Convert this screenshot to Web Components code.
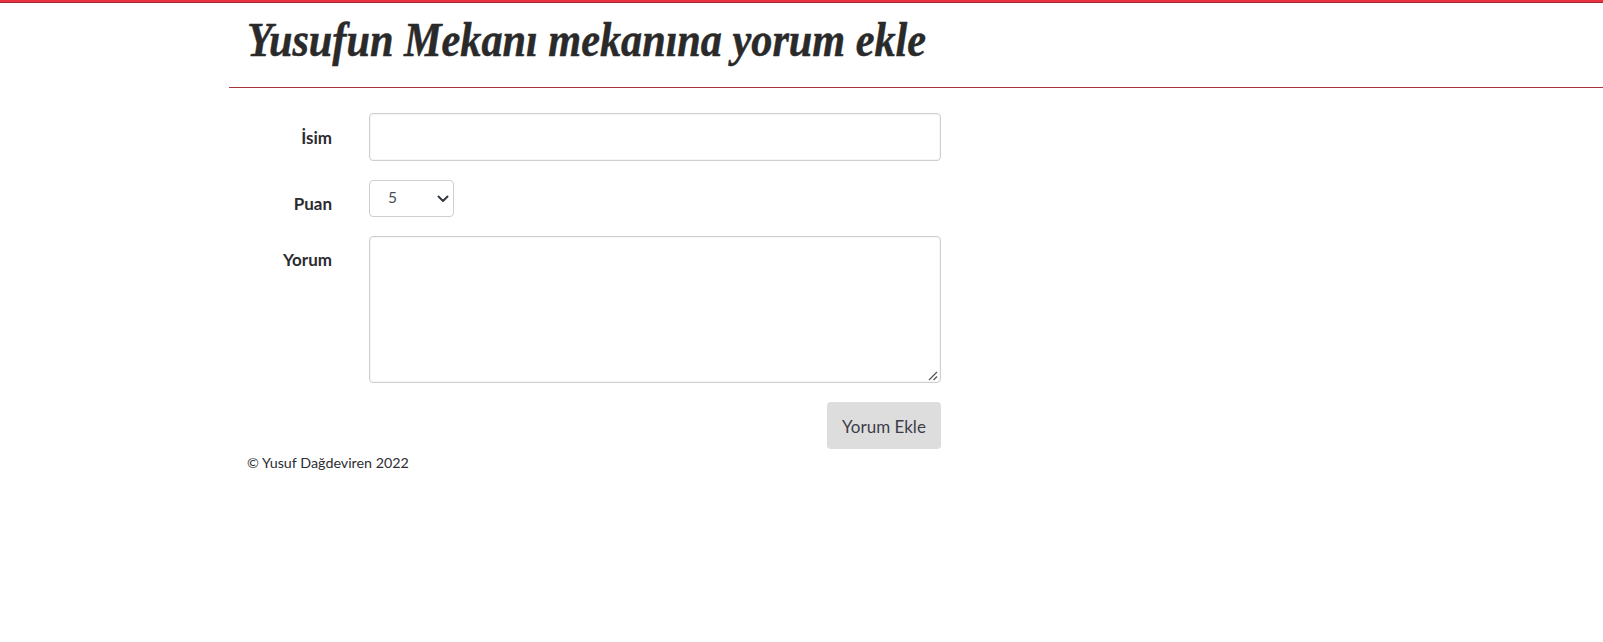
<!DOCTYPE html>
<html lang="tr">
<head>
<meta charset="utf-8">
<title>Yorum Ekle</title>
<style>
    html, body { margin: 0; padding: 0; background: #fff; }
    body { font-family: Lato, "Open Sans", sans-serif; color: #2c2c2c; }
</style>
</head>
<body>
<top-bar></top-bar>
<page-main>
    <page-header slot="header">Yusufun Mekanı mekanına yorum ekle</page-header>
    <review-form slot="form"></review-form>
    <page-footer slot="footer">© Yusuf Dağdeviren 2022</page-footer>
</page-main>

<script>
class TopBar extends HTMLElement {
    constructor() {
        super();
        this.attachShadow({mode: "open"}).innerHTML = `
            <style>
                :host {
                    display: block;
                    height: 2px;
                    background: #e8323f;
                    border-bottom: 1px solid #a32a30;
                }
            </style>
        `;
    }
}

class PageMain extends HTMLElement {
    constructor() {
        super();
        this.attachShadow({mode: "open"}).innerHTML = `
            <style>
                :host {
                    display: block;
                    margin-left: 229px;
                }
            </style>
            <slot name="header"></slot>
            <slot name="form"></slot>
            <slot name="footer"></slot>
        `;
    }
}

class PageHeader extends HTMLElement {
    constructor() {
        super();
        this.attachShadow({mode: "open"}).innerHTML = `
            <style>
                :host {
                    display: block;
                    height: 85px;
                    box-sizing: border-box;
                    padding: 9px 0 0 18px;
                    border-bottom: 1px solid #a5343a;
                }
                h1 {
                    margin: 0;
                    font: italic bold 48px/56px "Liberation Serif", serif;
                    -webkit-text-stroke: 0.5px #2a2a2a;
                    color: #2a2a2a;
                    white-space: nowrap;
                    transform: scaleX(0.88);
                    transform-origin: left center;
                }
            </style>
            <h1><slot></slot></h1>
        `;
    }
}

class FormRow extends HTMLElement {
    constructor() {
        super();
        this.attachShadow({mode: "open"}).innerHTML = `
            <style>
                :host {
                    display: grid;
                    grid-template-columns: 85px 572px;
                    column-gap: 37px;
                    margin-bottom: 19px;
                }
                label {
                    text-align: right;
                    font-size: 17px;
                    font-weight: 700;
                    line-height: 24px;
                    padding-top: var(--label-top, 12px);
                    color: #2b2b30;
                }
            </style>
            <label></label>
            <div><slot></slot></div>
        `;
    }
    connectedCallback() {
        this.shadowRoot.querySelector("label").textContent = this.getAttribute("label") || "";
    }
}

class ReviewForm extends HTMLElement {
    constructor() {
        super();
        this.attachShadow({mode: "open"}).innerHTML = `
            <style>
                :host {
                    display: block;
                    padding: 25px 0 0 18px;
                }
                input, textarea, select {
                    display: block;
                    box-sizing: border-box;
                    width: 100%;
                    background: #fff;
                    border: 1px solid #cfcfcf;
                    border-radius: 4px;
                    box-shadow: 0 0 0 1px #f6f6f6 inset;
                    font: 16px Lato, sans-serif;
                    color: #495057;
                    margin: 0;
                }
                input { height: 48px; }
                .area {
                    position: relative;
                    height: 147px;
                }
                textarea { height: 147px; resize: none; }
                .area svg {
                    position: absolute;
                    right: 3px;
                    bottom: 2px;
                    pointer-events: none;
                }
                .select {
                    position: relative;
                    width: 85px;
                    height: 37px;
                }
                select {
                    height: 37px;
                    appearance: none;
                    padding: 0 0 4px 18px;
                    font-size: 15.5px;
                    box-shadow: none;
                }
                .select svg {
                    position: absolute;
                    right: 5px;
                    top: 15px;
                    pointer-events: none;
                }
                .actions {
                    display: flex;
                    justify-content: flex-end;
                    width: 694px;
                }
                button {
                    height: 47px;
                    width: 114px;
                    border: 0;
                    border-radius: 4px;
                    background: #dddddd;
                    color: #3d3d4a;
                    font: 17px Lato, sans-serif;
                    padding: 2px 0 0;
                }
            </style>
            <form-row label="İsim" style="--label-top:13px"><input type="text"></form-row>
            <form-row label="Puan">
                <div class="select">
                    <select><option>5</option><option>4</option><option>3</option><option>2</option><option>1</option></select>
                    <svg width="12" height="8" viewBox="0 0 12 8"><path d="M1.5 1.5l4.5 4.5 4.5-4.5" fill="none" stroke="#343a40" stroke-width="2" stroke-linecap="round" stroke-linejoin="round"/></svg>
                </div>
            </form-row>
            <form-row label="Yorum">
                <div class="area">
                    <textarea></textarea>
                    <svg width="10" height="10" viewBox="0 0 10 10"><path d="M1 9L9 1M5.5 9L9 5.5" fill="none" stroke="#555" stroke-width="1.2"/></svg>
                </div>
            </form-row>
            <div class="actions"><button type="button">Yorum Ekle</button></div>
        `;
    }
}

class PageFooter extends HTMLElement {
    constructor() {
        super();
        this.attachShadow({mode: "open"}).innerHTML = `
            <style>
                :host {
                    display: block;
                    padding: 3px 0 0 18px;
                    font-size: 14.3px;
                    line-height: 21px;
                    color: #2d2d33;
                }
            </style>
            <slot></slot>
        `;
    }
}

customElements.define("top-bar", TopBar);
customElements.define("page-main", PageMain);
customElements.define("page-header", PageHeader);
customElements.define("form-row", FormRow);
customElements.define("review-form", ReviewForm);
customElements.define("page-footer", PageFooter);
</script>
</body>
</html>
